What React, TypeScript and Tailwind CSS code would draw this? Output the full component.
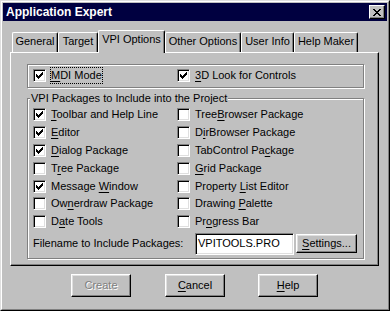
import React from 'react';

type Item = { label: string; u: number; checked?: boolean };

const leftItems: Item[] = [
  { label: 'Toolbar and Help Line', u: 0, checked: true },
  { label: 'Editor', u: 0, checked: true },
  { label: 'Dialog Package', u: 0, checked: true },
  { label: 'Tree Package', u: 1 },
  { label: 'Message Window', u: 8, checked: true },
  { label: 'Ownerdraw Package', u: 2 },
  { label: 'Date Tools', u: 1 },
];

const rightItems: Item[] = [
  { label: 'TreeBrowser Package', u: 4 },
  { label: 'DirBrowser Package', u: 1 },
  { label: 'TabControl Package', u: 13 },
  { label: 'Grid Package', u: 0 },
  { label: 'Property List Editor', u: 9 },
  { label: 'Drawing Palette', u: 8 },
  { label: 'Progress Bar', u: 2 },
];

const tabs = [
  { label: 'General', w: 'w-[46px]' },
  { label: 'Target', w: 'w-[40px]' },
  { label: 'VPI Options', w: 'w-[67px]', active: true },
  { label: 'Other Options', w: 'w-[76px]' },
  { label: 'User Info', w: 'w-[53px]' },
  { label: 'Help Maker', w: 'w-[64px]' },
];

const Mnemonic = ({ text, u }: { text: string; u: number }) => (
  <>
    {text.slice(0, u)}
    <u className="underline-offset-[2px]">{text.charAt(u)}</u>
    {text.slice(u + 1)}
  </>
);

const CheckBox = ({ checked }: { checked?: boolean }) => (
  <span className="w-[13px] h-[13px] shrink-0 bg-white border border-t-[#808080] border-l-[#808080] border-r-white border-b-white shadow-[inset_1px_1px_0_#000,inset_-1px_-1px_0_#dfdfdf] flex items-center justify-center">
    {checked && (
      <svg width="7" height="7" viewBox="0 0 7 7" shapeRendering="crispEdges">
        <path
          d="M6 0h1v1H6zM5 1h2v1H5zM0 2h1v1H0zM4 2h3v1H4zM0 3h2v1H0zM3 3h3v1H3zM0 4h5v1H0zM1 5h3v1H1zM2 6h1v1H2z"
          fill="#000"
        />
      </svg>
    )}
  </span>
);

const Option = ({ item, focus }: { item: Item; focus?: boolean }) => (
  <div className="flex items-center h-[17.8px]">
    <CheckBox checked={item.checked} />
    {focus ? (
      <span className="ml-[4px] border border-dotted border-black py-px leading-[13px]">
        <Mnemonic text={item.label} u={item.u} />
      </span>
    ) : (
      <span className="ml-[5px] leading-[13px] whitespace-nowrap">
        <Mnemonic text={item.label} u={item.u} />
      </span>
    )}
  </div>
);

const Button = ({
  children,
  className = '',
  disabled,
}: {
  children: React.ReactNode;
  className?: string;
  disabled?: boolean;
}) => (
  <div
    className={`flex items-center justify-center border border-t-white border-l-white border-r-black border-b-black shadow-[inset_-1px_-1px_0_#808080,inset_1px_1px_0_#dfdfdf] ${
      disabled ? 'text-[#808080] [text-shadow:1px_1px_0_#fff]' : 'text-black'
    } ${className}`}
  >
    {children}
  </div>
);

export default function App() {
  return (
    <div className="w-[390px] h-[311px] bg-[#c0c0c0] border border-t-[#dfdfdf] border-l-[#dfdfdf] border-r-black border-b-black font-['Liberation_Sans',Arial,sans-serif] text-[11px] text-black select-none">
      <div className="h-full border border-t-white border-l-white border-r-[#808080] border-b-[#808080] p-px">
        {/* title bar */}
        <div className="h-[18px] bg-[#000040] flex items-center justify-between pl-[3px] pr-[2px]">
          <span className="text-white font-bold text-[12px] leading-none">Application Expert</span>
          <div className="w-[16px] h-[14px] bg-[#c0c0c0] border border-t-white border-l-white border-r-black border-b-black shadow-[inset_-1px_-1px_0_#808080] flex items-center justify-center">
            <svg width="8" height="7" viewBox="0 0 8 7" shapeRendering="crispEdges">
              <path
                d="M0 0h2v1H0zM6 0h2v1H6zM1 1h2v1H1zM5 1h2v1H5zM2 2h4v1H2zM3 3h2v1H3zM2 4h4v1H2zM1 5h2v1H1zM5 5h2v1H5zM0 6h2v1H0zM6 6h2v1H6z"
                fill="#000"
              />
            </svg>
          </div>
        </div>

        {/* tabs */}
        <div className="mt-[9px] ml-[9px] h-[22px] flex items-end">
          {tabs.map((t) =>
            t.active ? (
              <div
                key={t.label}
                className={`${t.w} h-[23px] -mb-px relative z-10 bg-[#c0c0c0] border-l border-t border-r border-l-white border-t-white border-r-black rounded-t-[2px] shadow-[inset_-1px_0_0_#808080] flex justify-center pt-[2px] leading-[13px]`}
              >
                {t.label}
              </div>
            ) : (
              <div
                key={t.label}
                className={`${t.w} h-[20px] bg-[#c0c0c0] border-l border-t border-r border-l-white border-t-white border-r-black rounded-t-[2px] shadow-[inset_-1px_0_0_#808080] flex justify-center pt-[2px] leading-[13px]`}
              >
                {t.label}
              </div>
            ),
          )}
        </div>

        {/* tab panel */}
        <div className="ml-[7px] w-[369px] h-[214px] border border-t-white border-l-white border-r-black border-b-black shadow-[inset_-1px_-1px_0_#808080]">
          <div className="mt-[11px] ml-[16px] w-[337px] h-[24px] border border-[#808080] shadow-[inset_1px_1px_0_#fff,1px_1px_0_#fff] flex items-center pl-[5px]">
            <div className="w-[144px]">
              <Option item={{ label: 'MDI Mode', u: 0, checked: true }} focus />
            </div>
            <Option item={{ label: '3D Look for Controls', u: 0, checked: true }} />
          </div>

          <div className="mt-[10px] ml-[16px] w-[337px] h-[161px] border border-[#808080] shadow-[inset_1px_1px_0_#fff,1px_1px_0_#fff]">
            <div className="-mt-[7px] ml-[2px] w-fit bg-[#c0c0c0] px-px leading-[13px]">
              VPI Packages to Include into the Project
            </div>
            <div className="pt-px pl-[5px] flex">
              <div className="w-[144px]">
                {leftItems.map((it) => (
                  <Option key={it.label} item={it} />
                ))}
              </div>
              <div>
                {rightItems.map((it) => (
                  <Option key={it.label} item={it} />
                ))}
              </div>
            </div>
            <div className="mt-[2px] pl-[5px] flex items-center h-[22px]">
              <span className="w-[162px] leading-[13px]">Filename to Include Packages:</span>
              <div className="w-[99px] h-[22px] bg-white border border-t-[#808080] border-l-[#808080] border-r-white border-b-white shadow-[inset_1px_1px_0_#000,inset_-1px_-1px_0_#dfdfdf] flex items-center px-[2px] leading-[13px]">
                VPITOOLS.PRO
              </div>
              <Button className="ml-[2px] w-[61px] h-[19px]">
                <span className="leading-[13px]">
                  <Mnemonic text="Settings..." u={0} />
                </span>
              </Button>
            </div>
          </div>
        </div>

        {/* dialog buttons */}
        <div className="mt-[8px] flex">
          <Button className="ml-[68px] w-[60px] h-[23px]" disabled>
            Create
          </Button>
          <Button className="ml-[34px] w-[60px] h-[23px]">
            <Mnemonic text="Cancel" u={0} />
          </Button>
          <Button className="ml-[33px] w-[60px] h-[23px]">
            <Mnemonic text="Help" u={0} />
          </Button>
        </div>
      </div>
    </div>
  );
}
